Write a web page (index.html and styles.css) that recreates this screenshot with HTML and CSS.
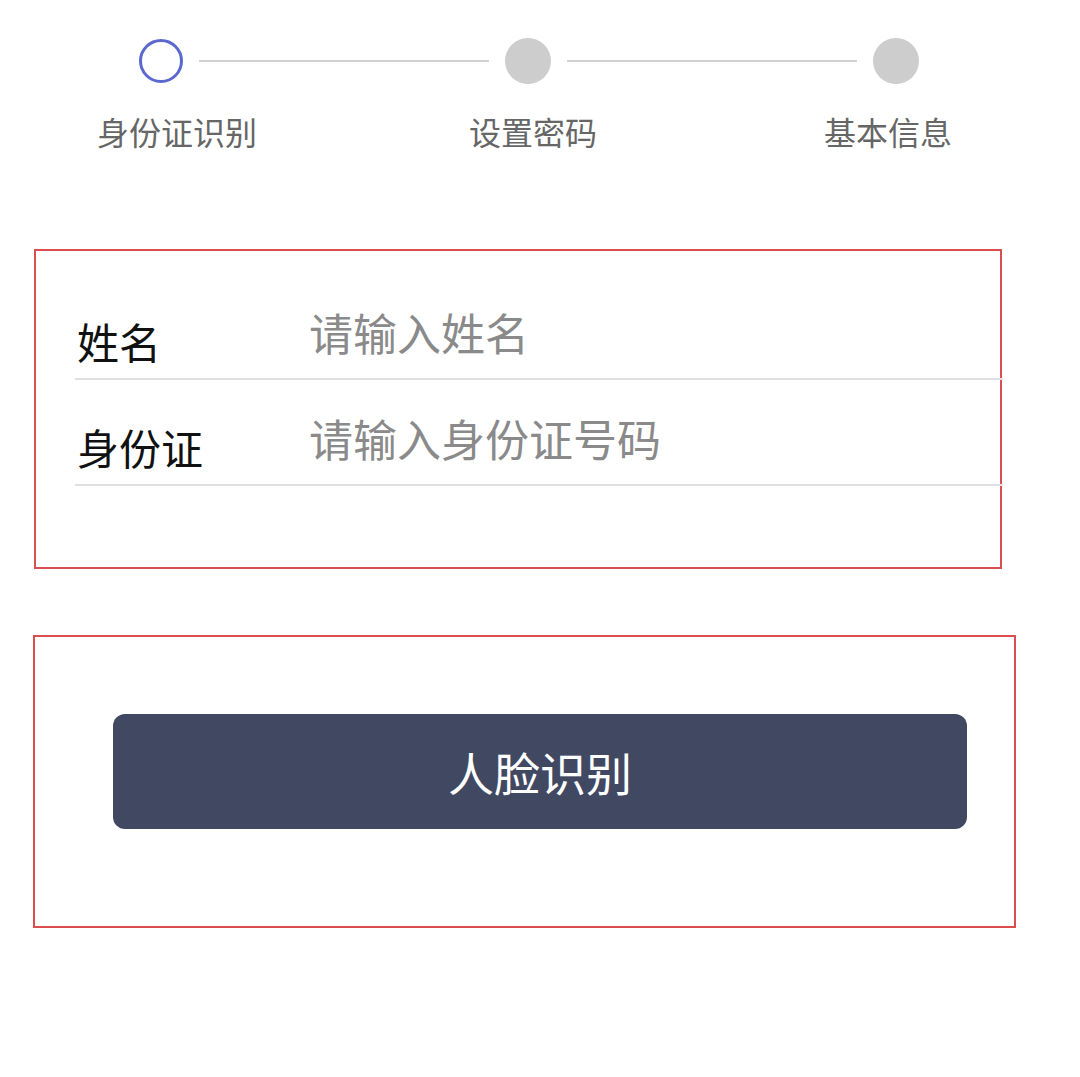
FILE: index.html
```html
<!DOCTYPE html>
<html lang="zh-CN">
<head>
<meta charset="utf-8">
<title>身份证识别</title>
<link rel="stylesheet" href="styles.css">
</head>
<body>
  <div class="steps">
    <span class="dot dot-active"></span>
    <span class="track"></span>
    <span class="dot"></span>
    <span class="track"></span>
    <span class="dot"></span>
  </div>
  <div class="step-labels">
    <span class="step-label l1">身份证识别</span>
    <span class="step-label l2">设置密码</span>
    <span class="step-label l3">基本信息</span>
  </div>

  <div class="form-box">
    <div class="row">
      <span class="label">姓名</span>
      <span class="placeholder">请输入姓名</span>
    </div>
    <div class="row">
      <span class="label">身份证</span>
      <span class="placeholder">请输入身份证号码</span>
    </div>
  </div>

  <div class="btn-box">
    <button class="btn" type="button">人脸识别</button>
  </div>
</body>
</html>
```
FILE: styles.css
```css
html, body {
  margin: 0;
  padding: 0;
  background: #ffffff;
}

body {
  width: 1080px;
  min-height: 1077px;
  font-family: "Noto Sans CJK SC", "Noto Sans", sans-serif;
}

/* ---------- steps ---------- */
.steps {
  display: flex;
  align-items: center;
  height: 46px;
  margin-top: 38px;
  padding-left: 139px;
  padding-right: 161px;
}

.dot {
  flex: none;
  width: 46px;
  height: 46px;
  border-radius: 50%;
  background: #cdcdcd;
}

.dot-active {
  width: 44px;
  height: 44px;
  box-sizing: border-box;
  background: #ffffff;
  border: 3px solid #5b69cf;
}

.track {
  flex: 1;
  height: 2px;
  margin: 0 16px;
  background: #d2d2d2;
}

.step-labels {
  display: flex;
  margin-top: 31px;
  font-size: 32px;
  line-height: 32px;
  color: #666666;
}

.l1 { margin-left: 97px; }
.l2 { margin-left: 212px; }
.l3 { margin-left: 227px; }

/* ---------- form ---------- */
.form-box {
  box-sizing: border-box;
  width: 968px;
  height: 320px;
  margin: 102px 0 0 34px;
  padding: 23px 0 0 39px;
  border: 2px solid #dc4d4d;
}

.row {
  display: flex;
  align-items: flex-start;
  height: 104px;
  margin-right: -3px;
  border-bottom: 2px solid #e0e0e0;
}

.label {
  flex: none;
  width: 232px;
  padding: 46px 0 0 2px;
  font-size: 42px;
  line-height: 42px;
  color: #111111;
}

.placeholder {
  padding-top: 36px;
  font-size: 44px;
  line-height: 44px;
  color: #8a8a8a;
}

/* ---------- button ---------- */
.btn-box {
  box-sizing: border-box;
  width: 983px;
  height: 293px;
  margin: 66px 0 0 33px;
  padding: 77px 0 0 78px;
  border: 2px solid #dc4d4d;
}

.btn {
  display: block;
  width: 854px;
  height: 115px;
  padding: 0;
  border: none;
  border-radius: 12px;
  background: #414862;
  color: #ffffff;
  font-family: "Noto Sans CJK SC", "Noto Sans", sans-serif;
  font-size: 46px;
  line-height: 115px;
  text-align: center;
}
```
